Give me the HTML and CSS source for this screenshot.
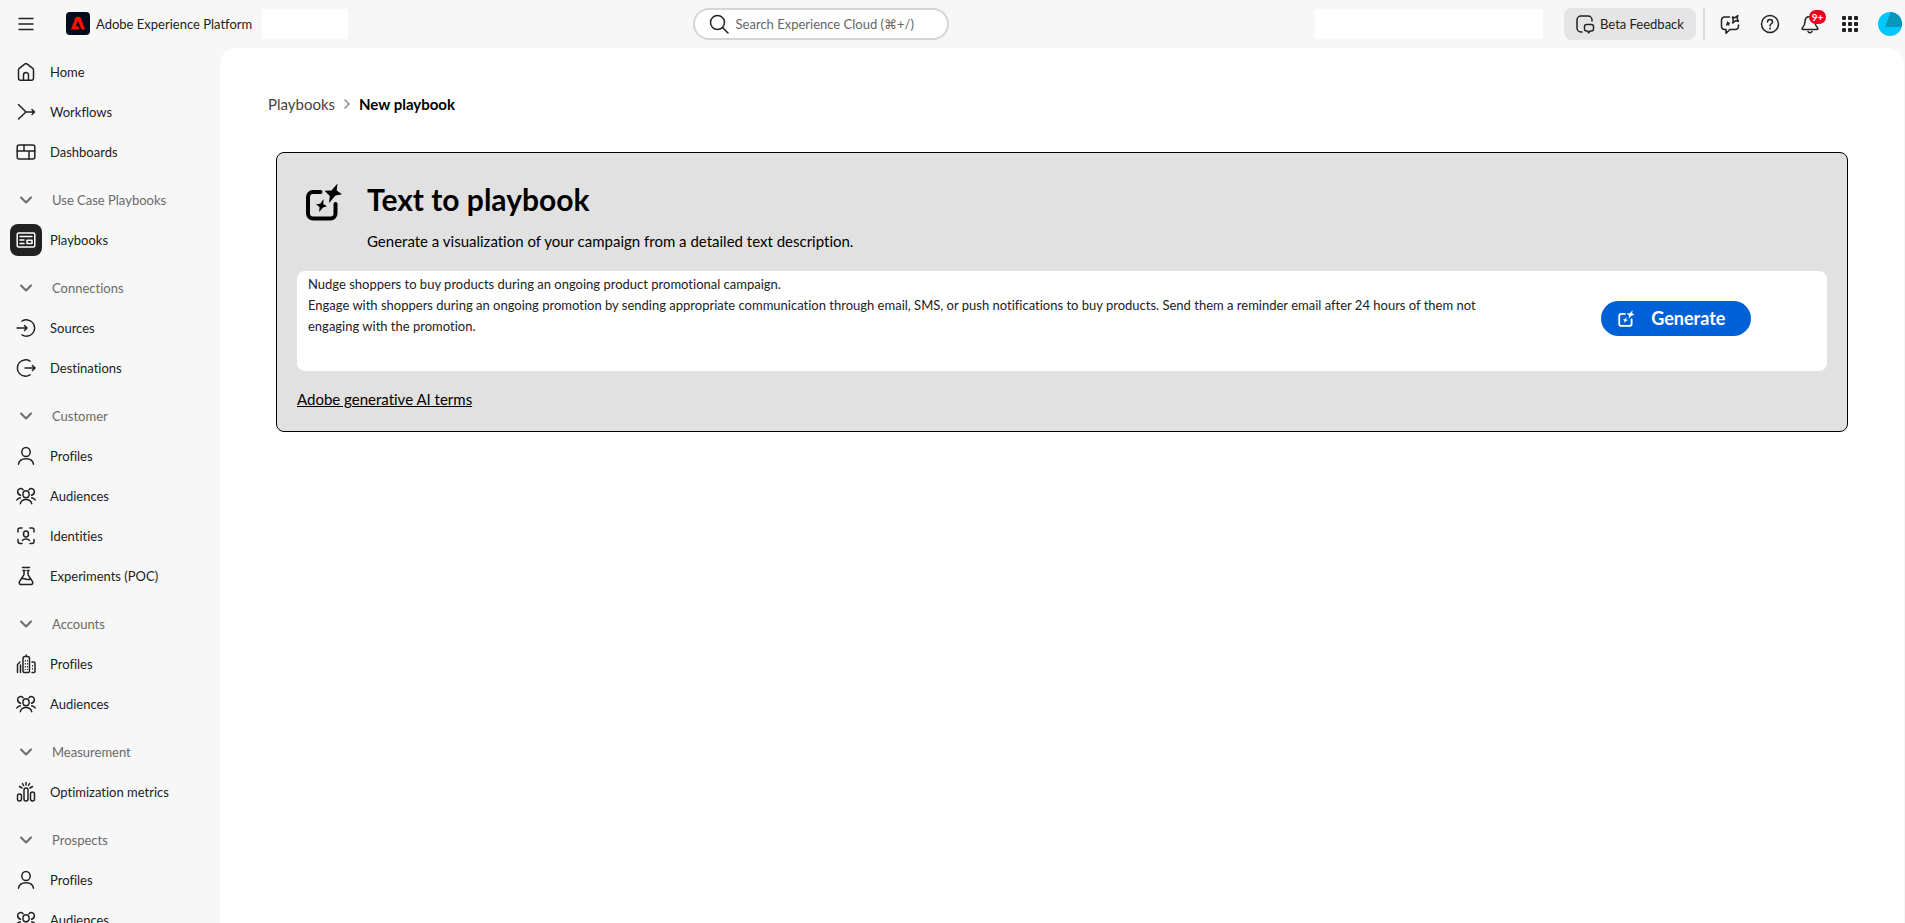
FILE: index.html
```html
<!DOCTYPE html>
<html lang="en">
<head>
<meta charset="utf-8">
<title>New playbook</title>
<link rel="stylesheet" href="styles.css">
</head>
<body>
<svg class="sprite" aria-hidden="true">
  <symbol id="i-chev" viewBox="0 0 20 20"><path d="M5 7.5l5 5 5-5"/></symbol>
  <symbol id="i-user" viewBox="0 0 20 20"><ellipse cx="10" cy="6" rx="4.2" ry="4.6"/><path d="M2.5 18.2c.5-3.6 3.500-5.500 7.500-5.500s7 1.900 7.500 5.500"/></symbol>
  <symbol id="i-aud" viewBox="0 0 20 20"><ellipse cx="10" cy="8.300" rx="3.100" ry="3.500"/><path d="M4.300 17.700c.6-2.700 2.900-4.200 5.700-4.200s5.100 1.500 5.700 4.200M.8 14c.7-1.300 1.900-1.900 3.500-2.200M19.200 14c-.7-1.300-1.900-1.900-3.500-2.200M4.500 9.200C2.600 8.700 1.500 7 1.700 5c.3-2.300 3.500-3.300 5.300-1.300M15.500 9.200c1.900-.5 3-2.200 2.800-4.200-.3-2.300-3.500-3.300-5.300-1.300"/></symbol>
  <symbol id="i-spark" viewBox="0 0 40 40"><path d="M17.500 11H10a5 5 0 0 0-5 5V32.500a5 5 0 0 0 5 5H27.500a5 5 0 0 0 5-5V23"/><path class="fill" d="M34.500 2.500L33.700 9.500 39 13.300 32.500 14.500 26 22 26.800 15 21.500 9.800 28.500 9.600zM20.500 18L20.300 23 24 25.200 20 26.500 16.200 31 16.500 26 13 23.200 17.300 22.700z"/></symbol>
</svg>
<header class="topbar">
  <div class="brand">
    <button class="icon-btn" aria-label="Menu"><svg viewBox="0 0 20 20"><path d="M3 4.500h14M3 10h14M3 15.500h14"/></svg></button>
    <svg class="logo" viewBox="0 0 24 24"><rect width="24" height="23" rx="4" fill="#000b1d"/><path d="M9.700 5h4.700l4.800 12.500h-3.800L12 8.700l-2.200 5.500h2.600l1.100 3.300H4.900z" fill="#fa0f00"/></svg>
    <span class="product">Adobe Experience Platform</span>
    <span class="blank blank-small"></span>
  </div>
  <label class="search"><svg viewBox="0 0 20 20"><circle cx="8.500" cy="8.500" r="7"/><path d="M13.500 13.500l5.500 5.500"/></svg><input type="text" aria-label="Search" placeholder="Search Experience Cloud (⌘+/)"></label>
  <div class="tools">
    <span class="blank blank-large"></span>
    <button class="beta"><svg viewBox="0 0 20 20"><path d="M7 18H6a4 4 0 0 1-4-4V6a4 4 0 0 1 4-4h7a4 4 0 0 1 4 4v1M11.500 10.500h5a2 2 0 0 1 2 2v2.500a2 2 0 0 1-2 2H15l-1.300 1.800-1.200-1.800h-1a2 2 0 0 1-2-2v-2.500a2 2 0 0 1 2-2z"/></svg>Beta Feedback</button>
    <span class="divider"></span>
    <button class="icon-btn" aria-label="AI Assistant"><svg viewBox="0 0 20 20"><path d="M9.500 3H4.500a3 3 0 0 0-3 3v6.500a3 3 0 0 0 3 3H6v3.800l4-3.800h5.500a3 3 0 0 0 3-3V11M12.500 3l2.200.8L17.800 1.500l-.7 3 1.400 2.800-3-.6L12.800 9l.4-3z"/><path class="fill" d="M7.500 7l1 1.500 2 .2-1.300 1.300.2 1.900-1.700-.8-1.700.8.300-1.900z"/></svg></button>
    <button class="icon-btn" aria-label="Help"><svg viewBox="0 0 20 20"><circle cx="10" cy="10" r="8.500"/><path d="M7.500 8c0-3.300 5-3.200 5-.1 0 1.900-2.500 1.900-2.500 4"/><circle class="fill" cx="10" cy="14.500" r="1"/></svg></button>
    <button class="icon-btn" aria-label="Notifications"><svg viewBox="0 0 20 20"><path d="M10 2.500c-3.300 0-5 2.300-5 5.200 0 3.300-1.200 4.800-2.600 6.300-.6.800-.3 1.500.6 1.500h14c.9 0 1.200-.7.600-1.500C16.200 12.500 15 11 15 7.700c0-2.900-1.700-5.200-5-5.200zM8 17.500c.7 1.500 3.300 1.500 4 0"/></svg><span class="badge">9+</span></button>
    <button class="icon-btn" aria-label="Apps"><svg viewBox="0 0 20 20"><g class="fill"><rect x="2" y="2" width="4" height="4" rx="1"/><rect x="8" y="2" width="4" height="4" rx="1"/><rect x="14" y="2" width="4" height="4" rx="1"/><rect x="2" y="8" width="4" height="4" rx="1"/><rect x="8" y="8" width="4" height="4" rx="1"/><rect x="14" y="8" width="4" height="4" rx="1"/><rect x="2" y="14" width="4" height="4" rx="1"/><rect x="8" y="14" width="4" height="4" rx="1"/><rect x="14" y="14" width="4" height="4" rx="1"/></g></svg></button>
    <button class="avatar" aria-label="Account"><svg viewBox="0 0 24 24"><circle cx="12" cy="12" r="12" fill="#00c8ff"/><path d="M12.500 0a12 12 0 0 1 11.200 15H7z" fill="#0797bb"/></svg></button>
  </div>
</header>
<div class="shell">
  <nav class="side">
    <a href="#" class="item"><svg viewBox="0 0 20 20"><path d="M7.500 18.300H4.500a2 2 0 0 1-2-2V8c0-.6.3-1.200.8-1.600l5.400-4.300a2 2 0 0 1 2.600 0l5.400 4.300c.5.400.8 1 .8 1.600v8.300a2 2 0 0 1-2 2h-3v-5.300a2.500 2.500 0 0 0-5 0zM7.500 18.300h5"/></svg>Home</a>
    <a href="#" class="item"><svg viewBox="0 0 20 20"><path d="M2.500 2.500L10 10l-7.500 7M10 10h8M16 7.500L18.500 10l-2.500 2.500"/></svg>Workflows</a>
    <a href="#" class="item"><svg viewBox="0 0 20 20"><rect x="1.200" y="3" width="17.600" height="14" rx="2"/><path d="M1.200 9h17.600M8 3v6M13 9v8"/></svg>Dashboards</a>
    <button class="group"><svg><use href="#i-chev"/></svg>Use Case Playbooks</button>
    <a href="#" class="item active"><svg viewBox="0 0 20 20"><rect x="1.200" y="3" width="17.600" height="14" rx="1.500"/><path d="M4 6.500h12M4 10h4M4 13.500h4M11 10.200h5v3.300h-5z"/></svg>Playbooks</a>
    <button class="group"><svg><use href="#i-chev"/></svg>Connections</button>
    <a href="#" class="item"><svg viewBox="0 0 20 20"><path d="M6 3.100A8.200 8.200 0 1 1 6 16.900M1 10h10M8.500 7.500L11 10l-2.500 2.500"/></svg>Sources</a>
    <a href="#" class="item"><svg viewBox="0 0 20 20"><path d="M14 3.100A8.200 8.200 0 1 0 14 16.900M9 10h10M16.500 7.500L19 10l-2.500 2.500"/></svg>Destinations</a>
    <button class="group"><svg><use href="#i-chev"/></svg>Customer</button>
    <a href="#" class="item"><svg><use href="#i-user"/></svg>Profiles</a>
    <a href="#" class="item"><svg><use href="#i-aud"/></svg>Audiences</a>
    <a href="#" class="item"><svg viewBox="0 0 20 20"><path d="M6 2H4a2 2 0 0 0-2 2v2M14 2h2a2 2 0 0 1 2 2v2M6 17.500H4a2 2 0 0 1-2-2v-2M14 17.500h2a2 2 0 0 0 2-2v-2M6.500 14.500c1-2 6-2 7 0"/><ellipse cx="10" cy="8" rx="2.500" ry="3"/></svg>Identities</a>
    <a href="#" class="item"><svg viewBox="0 0 20 20"><path d="M6.500 1.500h7M8 4.500v4.200l-4.500 7c-.8 1.400 0 2.800 1.500 2.800h10c1.500 0 2.300-1.400 1.500-2.800l-4.500-7V4.500M7 4.500h2M11 4.500h2M5.500 13c3-2 5 2 9 0"/></svg>Experiments (POC)</a>
    <button class="group"><svg><use href="#i-chev"/></svg>Accounts</button>
    <a href="#" class="item"><svg viewBox="0 0 20 20"><path d="M1.500 18.500V10.500L4 8M4.500 11v7.500M7 17V4.500a2 2 0 0 1 2-2h2.500a2 2 0 0 1 2 2V17a1.500 1.500 0 0 1-1.500 1.500H8.500A1.500 1.500 0 0 1 7 17zM10.200 1v1.500M16 8h1.500a1.500 1.500 0 0 1 1.500 1.500v8a1 1 0 0 1-1 1h-2"/><path d="M9.300 6v10M11.400 6v10M16.500 11v5" stroke-width="1" stroke-linecap="butt" stroke-dasharray="1.500 1.500"/></svg>Profiles</a>
    <a href="#" class="item"><svg><use href="#i-aud"/></svg>Audiences</a>
    <button class="group"><svg><use href="#i-chev"/></svg>Measurement</button>
    <a href="#" class="item"><svg viewBox="0 0 20 20"><rect x="1.500" y="12" width="4" height="7" rx="2"/><rect x="8" y="6" width="4" height="13" rx="2"/><rect x="14.500" y="10" width="4" height="9" rx="2"/><path d="M10 .5v2.500M6.500 1.500l1 2M13.500 1.500l-1 2M3.500 4.500l2.500 1.500M16.500 4.500L14 6"/></svg>Optimization metrics</a>
    <button class="group"><svg><use href="#i-chev"/></svg>Prospects</button>
    <a href="#" class="item"><svg><use href="#i-user"/></svg>Profiles</a>
    <a href="#" class="item"><svg><use href="#i-aud"/></svg>Audiences</a>
  </nav>
  <main class="content">
    <nav class="crumbs" aria-label="Breadcrumb"><a href="#">Playbooks</a><svg viewBox="0 0 10 10"><path d="M3 1l4 4-4 4"/></svg><strong>New playbook</strong></nav>
    <section class="panel">
      <div class="intro">
        <svg class="spark"><use href="#i-spark"/></svg>
        <div><h1>Text to playbook</h1><p>Generate a visualization of your campaign from a detailed text description.</p></div>
      </div>
      <form class="prompt">
        <textarea aria-label="Campaign description">Nudge shoppers to buy products during an ongoing product promotional campaign.
Engage with shoppers during an ongoing promotion by sending appropriate communication through email, SMS, or push notifications to buy products. Send them a reminder email after 24 hours of them not engaging with the promotion.</textarea>
        <div class="action"><button type="button" class="generate"><svg><use href="#i-spark"/></svg>Generate</button></div>
      </form>
      <a class="terms" href="#">Adobe generative AI terms</a>
    </section>
  </main>
</div>
</body>
</html>
```
FILE: styles.css
```css
* { box-sizing: border-box; }
body {
  margin: 0;
  height: 100vh;
  overflow: hidden;
  display: flex;
  flex-direction: column;
  background: #f7f7f7;
  color: #222;
  font: 13px/20px Lato, "Noto Sans", sans-serif;
  font-variant-ligatures: none;
}
button, input, textarea { font: inherit; font-variant-ligatures: none; color: inherit; }
button { border: 0; padding: 0; background: none; cursor: pointer; }
a { color: inherit; text-decoration: none; }
svg { width: 20px; height: 20px; flex: none; display: block; fill: none; stroke: currentColor; stroke-width: 1.5; stroke-linecap: round; stroke-linejoin: round; }
.fill { fill: currentColor; stroke: none; }
.sprite { position: absolute; width: 0; height: 0; }

.topbar { height: 48px; flex: none; display: grid; grid-template-columns: 42fr 256px 58fr; align-items: center; }
.brand { display: flex; align-items: center; padding-left: 16px; white-space: nowrap; }
.logo { width: 24px; height: 24px; margin: 0 6px 0 30px; stroke: none; }
.product { width: 155px; }
.blank { background: #fff; height: 30px; }
.blank-small { width: 86px; margin-left: 11px; }
.blank-large { width: 228px; margin-right: 21px; }
.search { display: flex; align-items: center; gap: 7px; height: 32px; padding-left: 14px; background: #fff; border: 2px solid #d5d5d5; border-radius: 16px; }
.search input { flex: 1; min-width: 0; padding: 0; border: 0; outline: 0; background: none; }
.search input::placeholder { color: #666; opacity: 1; }
.icon-btn { width: 20px; height: 20px; position: relative; }
.tools { display: flex; align-items: center; justify-content: flex-end; padding-right: 3px; }
.tools .icon-btn { margin-right: 20px; }
.beta { display: flex; align-items: center; gap: 5px; width: 132px; height: 32px; padding-left: 11px; border-radius: 8px; background: #e5e5e5; white-space: nowrap; }
.divider { width: 2px; height: 32px; margin: 0 15px 0 7px; background: #dadada; }
.badge { position: absolute; left: 9px; top: -4px; width: 17px; height: 14px; border-radius: 7px; background: #eb0019; color: #fff; font-size: 10px; line-height: 14px; font-weight: 700; text-align: center; }
.tools .avatar { margin-left: -2px; }
.avatar svg { width: 24px; height: 24px; stroke: none; }

.shell { flex: 1; min-height: 0; display: grid; grid-template-columns: 220px 1fr; }
.side { overflow: hidden; display: flex; flex-direction: column; padding: 4px 0 0 10px; }
.item, .group { flex: none; display: flex; align-items: center; height: 40px; text-align: left; white-space: nowrap; }
.item { gap: 8px; }
.item svg { width: 32px; height: 32px; padding: 6px; border-radius: 8px; }
.group { gap: 16px; padding-left: 6px; margin-top: 8px; color: #6a6a6a; }
.group svg { stroke-width: 2; }
.active svg { background: #222; color: #fff; }

.content { background: #fff; border-radius: 16px 16px 0 0; margin-right: 1px; padding: 44px 56px 0 48px; }
.crumbs { display: flex; align-items: center; gap: 7px; font-size: 15px; line-height: 24px; color: #444; }
.crumbs svg { width: 10px; height: 10px; color: #888; }
.crumbs strong { color: #000; }
.panel { margin: 36px 0 0 8px; padding: 24px 20px 20px; border: 1px solid #000; border-radius: 8px; background: #e1e1e1; color: #000; }
.intro { display: flex; gap: 24px; padding-left: 6px; }
.spark { width: 40px; height: 40px; margin-top: 4px; stroke-width: 4; }
h1 { margin: 0; font-size: 30px; line-height: 44px; font-weight: 700; }
.intro p { margin: 8px 0 0; font-size: 15px; line-height: 24px; }
.prompt { display: flex; height: 100px; margin: 18px 0 16px; border-radius: 8px; background: #fff; color: #222; }
.prompt textarea { flex: 80; min-width: 0; border: 0; outline: 0; resize: none; overflow: hidden; background: none; padding: 3px 11px; line-height: 21px; }
.action { flex: 20; display: flex; align-items: center; justify-content: center; padding-bottom: 6px; }
.generate { display: flex; align-items: center; gap: 16px; width: 150px; height: 35px; padding-left: 16px; border-radius: 18px; background: #0060d8; color: #fff; font-size: 18px; font-weight: 700; }
.generate svg { width: 18px; height: 18px; stroke-width: 4; }
.terms { display: inline-block; font-size: 15px; line-height: 24px; text-decoration: underline; }
```
